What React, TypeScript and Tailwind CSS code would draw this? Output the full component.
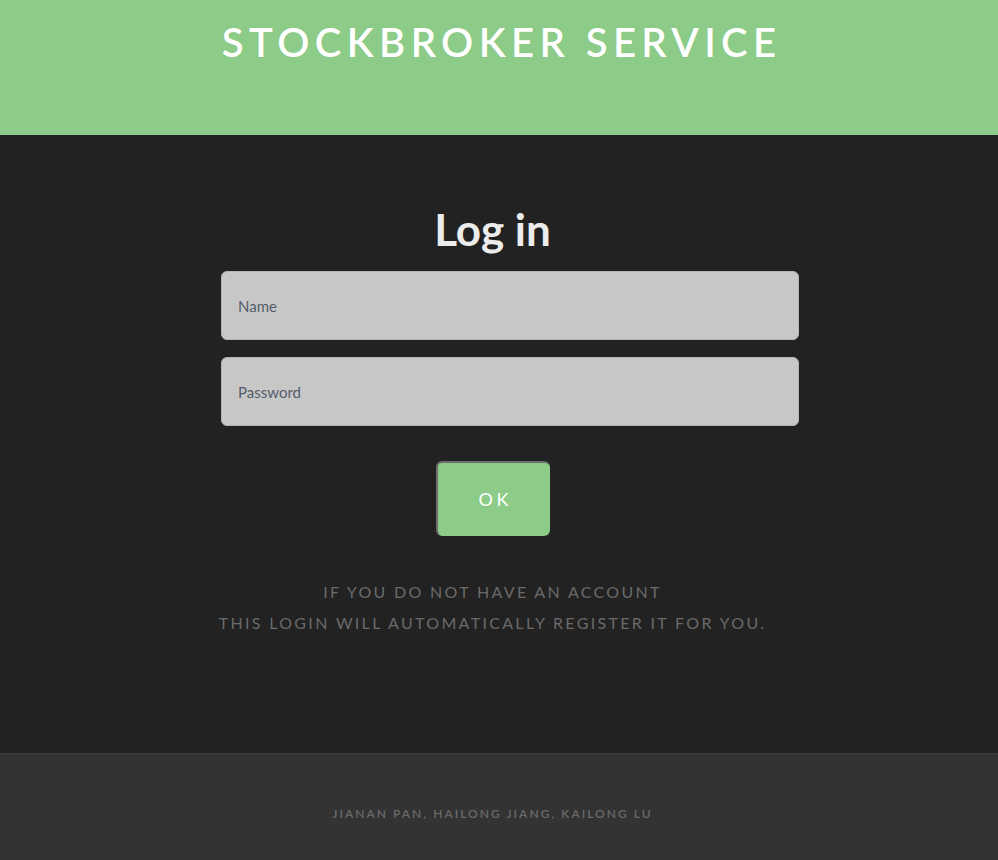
export default function App() {
  const font = { fontFamily: '"Source Sans Pro", Lato, "Noto Sans", sans-serif' };
  return (
    <div className="min-h-[860px] flex flex-col bg-[#222222]" style={font}>
      {/* Header */}
      <header className="h-[135px] bg-[#8ccb88] flex justify-center">
        <h1 className="mt-[18px] text-[40px] leading-[48px] font-semibold tracking-[0.135em] text-white pl-[0.135em]">
          STOCKBROKER SERVICE
        </h1>
      </header>

      {/* Login form */}
      <main className="h-[618px] flex flex-col items-center pr-[13px]">
        <h2 className="mt-[66px] text-[44px] leading-[56px] font-bold text-[#ececec]">Log in</h2>
        <div className="mt-[14px] ml-[35px] w-[578px] flex flex-col gap-[17px]">
          <input
            placeholder="Name"
            className="h-[69px] rounded-md bg-[#c7c7c7] border border-[#b5b5b5] px-4 text-[15px] text-[#555d6b] placeholder:text-[#555d6b] outline-none"
          />
          <input
            type="password"
            placeholder="Password"
            className="h-[69px] rounded-md bg-[#c7c7c7] border border-[#b5b5b5] px-4 text-[15px] text-[#555d6b] placeholder:text-[#555d6b] outline-none"
          />
        </div>
        <button className="mt-[35px] w-[114px] h-[75px] rounded-md bg-[#8ccb88] border-l-2 border-t-2 border-[#6e6e6e] text-white text-[18px] tracking-[0.2em] pl-[0.2em]">
          OK
        </button>
        <div className="mt-[40px] text-center text-[16px] leading-[31px] tracking-[0.145em] text-[#6a6a6a]">
          <p>IF YOU DO NOT HAVE AN ACCOUNT</p>
          <p>THIS LOGIN WILL AUTOMATICALLY REGISTER IT FOR YOU.</p>
        </div>
      </main>

      {/* Footer */}
      <footer className="flex-1 bg-[#333333] border-t border-[#3d3d3d] flex justify-center pt-[51px] pb-[38px] pr-[13px]">
        <p className="text-[12px] leading-[18px] font-semibold tracking-[0.17em] text-[#6a6a6a]">
          JIANAN PAN, HAILONG JIANG, KAILONG LU
        </p>
      </footer>
    </div>
  );
}
